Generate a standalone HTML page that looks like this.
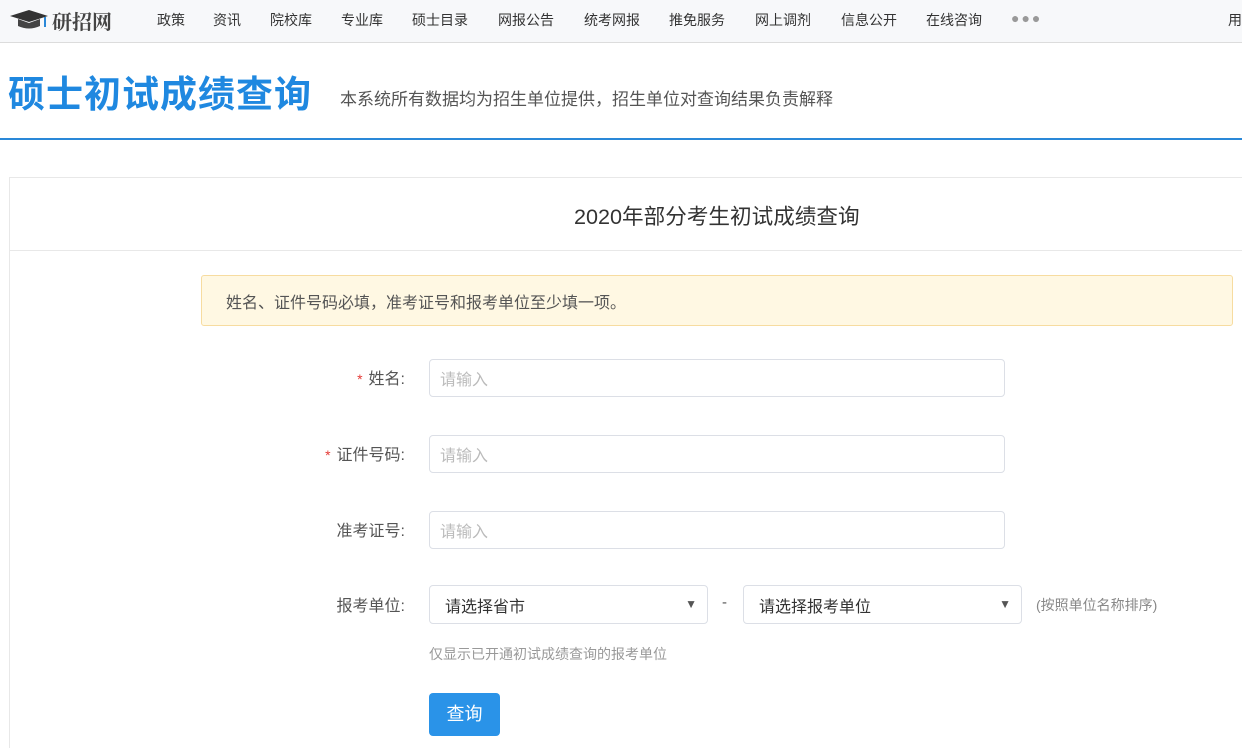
<!DOCTYPE html>
<html><head><meta charset="utf-8"><style>
*{margin:0;padding:0;box-sizing:border-box}
html,body{width:1242px;height:748px;overflow:hidden}
body{background:#fff;font-family:"Liberation Sans","Noto Sans CJK SC",sans-serif;color:#333;position:relative}
.nav{position:absolute;left:0;top:0;width:1242px;height:43px;background:#f7f8fa;border-bottom:1px solid #dcdcdc}
.nav span{position:absolute;top:10px;font-size:14px;color:#333}
.logo{position:absolute;left:52px;top:6px;font-size:20px;font-weight:bold;color:#444;font-family:"Noto Serif CJK SC",serif}
.t1{position:absolute;left:8px;top:64px;font-size:37px;font-weight:bold;color:#1f88e0;letter-spacing:1px}
.t2{position:absolute;left:340px;top:85px;font-size:17px;color:#555}
.bl{position:absolute;left:0;top:138px;width:1242px;height:2px;background:#2a88d8}
.card{position:absolute;left:9px;top:177px;width:1250px;height:600px;border:1px solid #e8e8e8}
.ch{position:absolute;left:0;top:0;width:100%;height:73px;border-bottom:1px solid #e8e8e8}
.ch div{position:absolute;left:564px;top:22px;font-size:21.6px;color:#333}
.alert{position:absolute;left:201px;top:275px;width:1032px;height:51px;background:#fff8e3;border:1px solid #f7dca0;border-radius:3px;font-size:16px;color:#555;padding:13px 0 0 24px}
.lab{position:absolute;right:837px;font-size:16px;color:#555}
.lab i{color:#e53935;font-style:normal;margin-right:6px;font-size:14px}
.inp{position:absolute;left:429px;width:576px;height:38px;border:1px solid #dcdfe6;border-radius:4px;font-size:16px;color:#bbb;padding:6px 0 0 10px}
.sel{position:absolute;top:585px;width:279px;height:39px;border:1px solid #dcdfe6;border-radius:4px;font-size:16px;color:#333;padding:7px 0 0 15px}
.sel b{position:absolute;right:10px;top:11px;font-size:12px;color:#555;font-weight:normal}
</style></head><body>
<div class="nav">
<svg style="position:absolute;left:9px;top:9px" width="40" height="22" viewBox="0 0 40 22"><polygon points="1,7 20,1 39,7 20,13" fill="#333"/><path d="M9,10 L9,17 Q20,22 31,17 L31,10 L20,14 Z" fill="#444"/><line x1="36" y1="8" x2="36" y2="18" stroke="#2a88d8" stroke-width="2"/></svg>
<div class="logo">研招网</div>
<span style="left:157px">政策</span><span style="left:213px">资讯</span><span style="left:270px">院校库</span><span style="left:341px">专业库</span><span style="left:412px">硕士目录</span><span style="left:498px">网报公告</span><span style="left:584px">统考网报</span><span style="left:669px">推免服务</span><span style="left:755px">网上调剂</span><span style="left:841px">信息公开</span><span style="left:926px">在线咨询</span><span style="left:1011px;top:10px;color:#999;letter-spacing:2px">●●●</span><span style="left:1228px">用</span>
</div>
<div class="t1">硕士初试成绩查询</div>
<div class="t2">本系统所有数据均为招生单位提供，招生单位对查询结果负责解释</div>
<div class="bl"></div>
<div class="card"><div class="ch"><div>2020年部分考生初试成绩查询</div></div></div>
<div class="alert">姓名、证件号码必填，准考证号和报考单位至少填一项。</div>
<div class="lab" style="top:365px"><i>*</i>姓名:</div>
<div class="inp" style="top:359px">请输入</div>
<div class="lab" style="top:441px"><i>*</i>证件号码:</div>
<div class="inp" style="top:435px">请输入</div>
<div class="lab" style="top:517px">准考证号:</div>
<div class="inp" style="top:511px">请输入</div>
<div class="lab" style="top:592px">报考单位:</div>
<div class="sel" style="left:429px">请选择省市<b>▼</b></div>
<div style="position:absolute;left:722px;top:594px;font-size:15px;color:#555">-</div>
<div class="sel" style="left:743px">请选择报考单位<b>▼</b></div>
<div style="position:absolute;left:1036px;top:595px;font-size:14px;color:#888">(按照单位名称排序)</div>
<div style="position:absolute;left:429px;top:644px;font-size:14px;color:#999">仅显示已开通初试成绩查询的报考单位</div>
<div style="position:absolute;left:429px;top:693px;width:71px;height:43px;background:#2a93e8;border-radius:4px;color:#fff;font-size:18px;text-align:center;line-height:43px">查询</div>
</body></html>
